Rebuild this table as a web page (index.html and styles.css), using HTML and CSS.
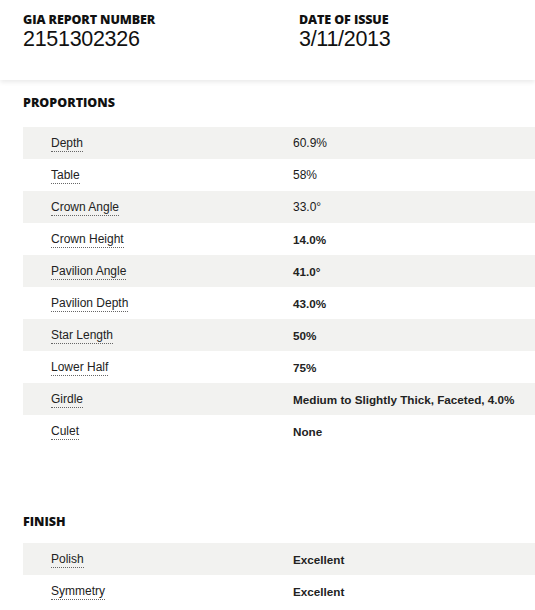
FILE: index.html
```html
<!DOCTYPE html>
<html>
<head>
<meta charset="utf-8">
<link rel="stylesheet" href="styles.css">
</head>
<body>
<header class="report-head">
  <div class="head-item">
    <div class="head-label">GIA REPORT NUMBER</div>
    <div class="head-value">2151302326</div>
  </div>
  <div class="head-item">
    <div class="head-label">DATE OF ISSUE</div>
    <div class="head-value">3/11/2013</div>
  </div>
</header>

<section class="section">
  <h2 class="section-title">PROPORTIONS</h2>
  <div class="table">
    <div class="row alt"><span class="cell-label"><span class="term">Depth</span></span><span class="cell-value">60.9%</span></div>
    <div class="row"><span class="cell-label"><span class="term">Table</span></span><span class="cell-value">58%</span></div>
    <div class="row alt"><span class="cell-label"><span class="term">Crown Angle</span></span><span class="cell-value">33.0°</span></div>
    <div class="row"><span class="cell-label"><span class="term">Crown Height</span></span><span class="cell-value strong">14.0%</span></div>
    <div class="row alt"><span class="cell-label"><span class="term">Pavilion Angle</span></span><span class="cell-value strong">41.0°</span></div>
    <div class="row"><span class="cell-label"><span class="term">Pavilion Depth</span></span><span class="cell-value strong">43.0%</span></div>
    <div class="row alt"><span class="cell-label"><span class="term">Star Length</span></span><span class="cell-value strong">50%</span></div>
    <div class="row"><span class="cell-label"><span class="term">Lower Half</span></span><span class="cell-value strong">75%</span></div>
    <div class="row alt"><span class="cell-label"><span class="term">Girdle</span></span><span class="cell-value strong">Medium to Slightly Thick, Faceted, 4.0%</span></div>
    <div class="row"><span class="cell-label"><span class="term">Culet</span></span><span class="cell-value strong">None</span></div>
  </div>
</section>

<section class="section finish">
  <h2 class="section-title">FINISH</h2>
  <div class="table">
    <div class="row alt"><span class="cell-label"><span class="term">Polish</span></span><span class="cell-value strong">Excellent</span></div>
    <div class="row"><span class="cell-label"><span class="term">Symmetry</span></span><span class="cell-value strong">Excellent</span></div>
  </div>
</section>
</body>
</html>
```
FILE: styles.css
```css
html, body {
  margin: 0;
  padding: 0;
  background: #ffffff;
  overflow: hidden;
}

body {
  font-family: "Liberation Sans", Arial, sans-serif;
  color: #1a1a1a;
}

.report-head {
  display: grid;
  grid-template-columns: 276px 1fr;
  height: 80px;
  box-sizing: border-box;
  padding: 13px 0 0 23px;
  background: #fff;
  box-shadow: 0 2px 5px rgba(0, 0, 0, 0.09);
  position: relative;
}

.head-label {
  font-family: "Open Sans", sans-serif;
  font-weight: 800;
  font-size: 12.5px;
  line-height: 13px;
  letter-spacing: -0.1px;
  color: #111;
}

.head-value {
  font-family: "Liberation Sans", Arial, sans-serif;
  font-size: 21.5px;
  line-height: 26px;
  color: #111;
  letter-spacing: -0.3px;
}

.section {
  padding: 15px 0 0 23px;
}

.section.finish {
  padding-top: 67px;
}

.section-title {
  margin: 0 0 16px;
  font-family: "Open Sans", sans-serif;
  font-weight: 800;
  font-size: 12.5px;
  line-height: 16px;
  letter-spacing: 0;
  color: #111;
}

.finish .section-title {
  margin-bottom: 13px;
}

.table {
  display: flex;
  flex-direction: column;
}

.row {
  display: flex;
  align-items: center;
  height: 32px;
  font-size: 12px;
}

.row.alt {
  background: #f2f2f0;
}

.cell-label {
  width: 242px;
  padding-left: 28px;
  flex: none;
  color: #222;
}

.term {
  display: inline-block;
  line-height: 14px;
  border-bottom: 1px dotted #666;
  padding-bottom: 1px;
  position: relative;
  top: 1px;
}

.cell-value {
  color: #1a1a1a;
}

.cell-value.strong {
  font-weight: bold;
  font-size: 11.7px;
  color: #222;
}
```
